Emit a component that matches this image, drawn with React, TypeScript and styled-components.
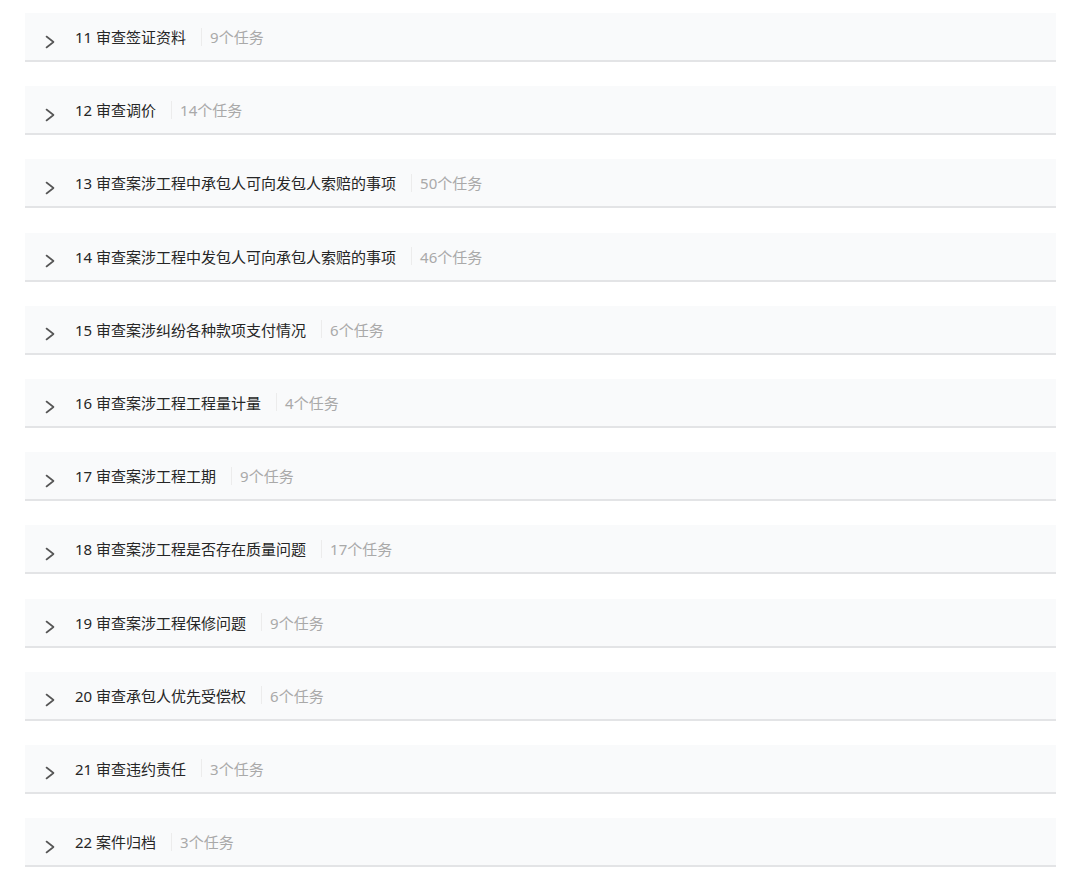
import * as React from "react";
import styled, { createGlobalStyle } from "styled-components";

const GlobalStyle = createGlobalStyle`
  html, body {
    margin: 0;
    padding: 0;
    background: #ffffff;
  }
  body {
    font-family: "Noto Sans", "Noto Sans CJK SC", sans-serif;
    -webkit-font-smoothing: antialiased;
  }
`;

type Stage = {
  no: number;
  title: string;
  tasks: number;
};

const stages: Stage[] = [
  { no: 11, title: "审查签证资料", tasks: 9 },
  { no: 12, title: "审查调价", tasks: 14 },
  { no: 13, title: "审查案涉工程中承包人可向发包人索赔的事项", tasks: 50 },
  { no: 14, title: "审查案涉工程中发包人可向承包人索赔的事项", tasks: 46 },
  { no: 15, title: "审查案涉纠纷各种款项支付情况", tasks: 6 },
  { no: 16, title: "审查案涉工程工程量计量", tasks: 4 },
  { no: 17, title: "审查案涉工程工期", tasks: 9 },
  { no: 18, title: "审查案涉工程是否存在质量问题", tasks: 17 },
  { no: 19, title: "审查案涉工程保修问题", tasks: 9 },
  { no: 20, title: "审查承包人优先受偿权", tasks: 6 },
  { no: 21, title: "审查违约责任", tasks: 3 },
  { no: 22, title: "案件归档", tasks: 3 },
];

const Page = styled.div`
  display: flex;
  flex-direction: column;
  gap: 24.2px;
  padding: 13px 24px 0 25px;
`;

const Row = styled.div`
  display: flex;
  align-items: center;
  box-sizing: border-box;
  height: 49px;
  padding: 0 0 0 20px;
  background: #f9fafb;
  border-bottom: 2px solid #e3e4e6;
  cursor: pointer;
`;

const Chevron = styled.svg`
  flex: none;
  width: 10px;
  height: 14px;
  margin-top: 10px;
  margin-right: 20px;
`;

const Title = styled.span`
  font-size: 15px;
  font-weight: 400;
  color: #262626;
  white-space: nowrap;
`;

const Divider = styled.span`
  width: 1px;
  height: 18px;
  margin: 0 8px 0 15px;
  background: #ececec;
`;

const Count = styled.span`
  font-size: 15px;
  color: #a9a9a9;
  white-space: nowrap;
`;

export default function App() {
  return (
    <>
      <GlobalStyle />
      <Page>
        {stages.map((s) => (
          <Row key={s.no}>
            <Chevron viewBox="0 0 10 14" fill="none">
              <path
                d="M1.5 1.5 L8.5 7 L1.5 12.5"
                stroke="#555"
                strokeWidth="1.6"
                strokeLinecap="round"
                strokeLinejoin="round"
              />
            </Chevron>
            <Title>
              {s.no} {s.title}
            </Title>
            <Divider />
            <Count>{s.tasks}个任务</Count>
          </Row>
        ))}
      </Page>
    </>
  );
}
